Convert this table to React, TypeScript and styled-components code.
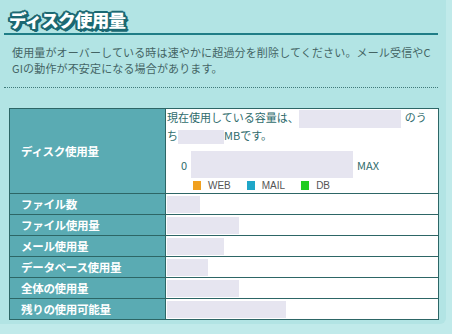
import styled, { createGlobalStyle } from 'styled-components';

const GlobalStyle = createGlobalStyle`
  html, body {
    margin: 0;
    padding: 0;
    background: #c0eaea;
  }
  body {
    font-family: "Noto Sans CJK JP", "Noto Sans", sans-serif;
  }
`;

const Panel = styled.div`
  width: 446px;
  height: 324px;
  background: #b2e4e4;
  border-radius: 0 0 6px 0;
  box-sizing: border-box;
  padding-top: 7px;
  overflow: hidden;
`;

const Heading = styled.div`
  margin: 0 8px 0 4px;
  padding: 0 0 1px 5px;
  border-bottom: 2px solid #1f7d86;
`;

const HeadingText = styled.h1`
  margin: 0;
  font-size: 17.5px;
  line-height: 25px;
  font-weight: 900;
  letter-spacing: -0.7px;
  color: #ffffff;
  text-shadow:
    -1px -1px 0 #1b6872, 1px -1px 0 #1b6872, -1px 1px 0 #1b6872, 1px 1px 0 #1b6872,
    0 -2px 0 #1b6872, 0 2px 0 #1b6872, -2px 0 0 #1b6872, 2px 0 0 #1b6872,
    -2px -1px 0 #1b6872, 2px -1px 0 #1b6872, -2px 1px 0 #1b6872, 2px 1px 0 #1b6872,
    2px 3px 0 #1b6872, 3px 2px 0 #1b6872;
`;

const Notice = styled.p`
  margin: 0 8px 0 4px;
  padding: 9px 0 11px 8px;
  font-size: 11px;
  line-height: 16px;
  letter-spacing: 0.15px;
  color: #446464;
  white-space: nowrap;
  border-bottom: 1px dotted #3f7a7a;
`;

const Table = styled.table`
  margin: 20px 0 0 9px;
  width: 430px;
  border-collapse: collapse;
  table-layout: fixed;
  background: #ffffff;
`;

const Label = styled.th`
  width: 156px;
  box-sizing: border-box;
  padding: 0 0 0 11px;
  text-align: left;
  font-size: 11.5px;
  font-weight: 700;
  letter-spacing: -0.3px;
  color: #ffffff;
  background: #5aabb3;
  border: 1px solid #2d6666;
`;

const Cell = styled.td<{ $tall?: boolean }>`
  height: ${({ $tall }) => ($tall ? '84px' : '20px')};
  padding: 0 0 0 1px;
  vertical-align: ${({ $tall }) => ($tall ? 'top' : 'middle')};
  border: 1px solid #2d6666;
  font-size: 11px;
  color: #2f6c6c;
`;

const Blank = styled.span<{ $w: number; $h?: number }>`
  display: inline-block;
  width: ${({ $w }) => $w}px;
  height: ${({ $h }) => $h ?? 17}px;
  background: #e6e5f0;
  vertical-align: middle;
`;

const UsageText = styled.div`
  line-height: 15px;
  padding-top: 1px;
  white-space: nowrap;
`;

const Gap = styled.span<{ $w: number }>`
  display: inline-block;
  width: ${({ $w }) => $w}px;
`;

const Gauge = styled.div`
  display: flex;
  align-items: center;
  gap: 4px;
  margin: 7px 0 0 14px;
  font-size: 11px;
  color: #2f6c6c;
`;

const GaugeBar = styled.div`
  width: 162px;
  height: 27px;
  background: #e6e5f0;
`;

const Legend = styled.div`
  display: flex;
  align-items: center;
  margin: 2px 0 0 26px;
  font-family: "Liberation Sans", Arial, sans-serif;
  font-size: 10px;
  color: #555555;
`;

const LegendItem = styled.span<{ $color: string }>`
  display: inline-flex;
  align-items: center;
  margin-right: 16px;

  &::before {
    content: '';
    width: 8px;
    height: 9px;
    margin-right: 7px;
    background: ${({ $color }) => $color};
  }
`;

const rows: { label: string; width: number }[] = [
  { label: 'ファイル数', width: 33 },
  { label: 'ファイル使用量', width: 72 },
  { label: 'メール使用量', width: 57 },
  { label: 'データベース使用量', width: 41 },
  { label: '全体の使用量', width: 72 },
  { label: '残りの使用可能量', width: 119 },
];

export default function App() {
  return (
    <>
      <GlobalStyle />
      <Panel>
        <Heading>
          <HeadingText>ディスク使用量</HeadingText>
        </Heading>
        <Notice>
          使用量がオーバーしている時は速やかに超過分を削除してください。メール受信やC
          <br />
          GIの動作が不安定になる場合があります。
        </Notice>
        <Table>
          <tbody>
            <tr>
              <Label>ディスク使用量</Label>
              <Cell $tall>
                <UsageText>
                  現在使用している容量は、
                  <Blank $w={102} $h={18} />
                  <Gap $w={4} />
                  のう
                  <br />
                  ち<Blank $w={46} $h={14} />
                  MBです。
                </UsageText>
                <Gauge>
                  <span>0</span>
                  <GaugeBar />
                  <span>MAX</span>
                </Gauge>
                <Legend>
                  <LegendItem $color="#f0a020">WEB</LegendItem>
                  <LegendItem $color="#1fa6c8">MAIL</LegendItem>
                  <LegendItem $color="#22cc22">DB</LegendItem>
                </Legend>
              </Cell>
            </tr>
            {rows.map((r) => (
              <tr key={r.label}>
                <Label>{r.label}</Label>
                <Cell>
                  <Blank $w={r.width} />
                </Cell>
              </tr>
            ))}
          </tbody>
        </Table>
      </Panel>
    </>
  );
}
